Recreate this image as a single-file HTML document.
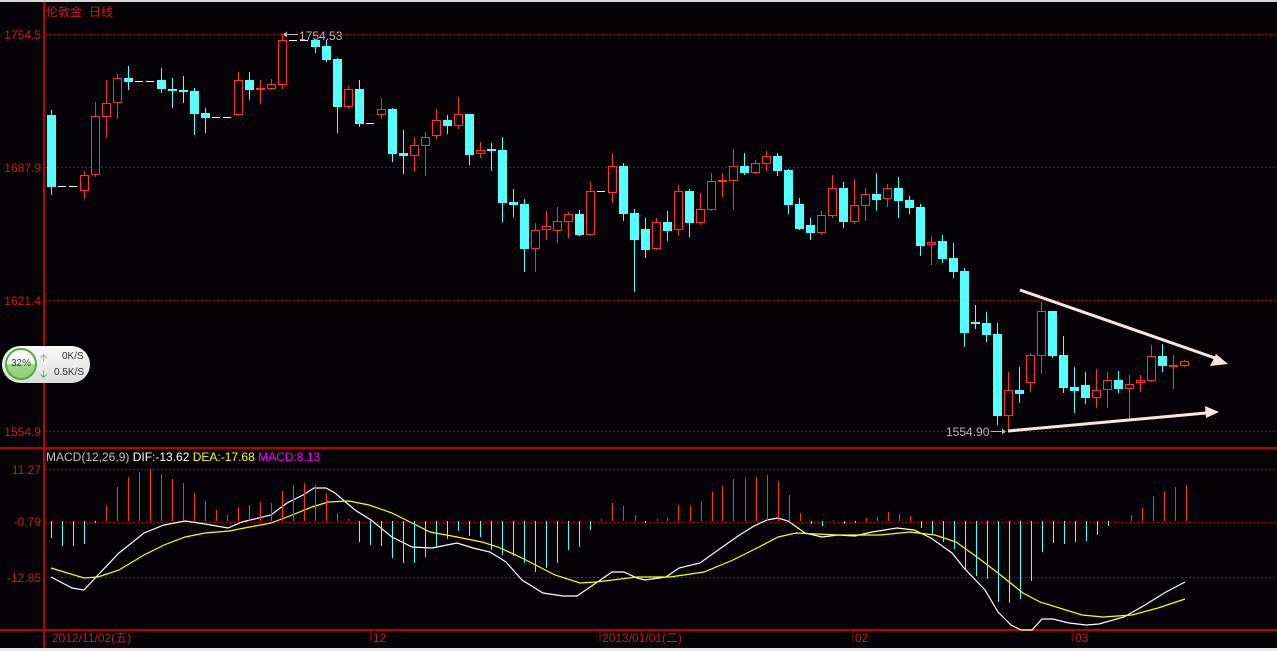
<!DOCTYPE html>
<html><head><meta charset="utf-8"><style>
html,body{margin:0;padding:0;background:#050308;}
body{width:1277px;height:651px;overflow:hidden;position:relative;font-family:"Liberation Sans","Noto Sans CJK SC",sans-serif;}
svg{position:absolute;left:0;top:0}
.pill{position:absolute;left:2px;top:346px;width:88px;height:37px;border-radius:19px;background:linear-gradient(#fafafa,#dcdcdc);}
.circ{position:absolute;left:3px;top:2px;width:28px;height:28px;border-radius:50%;border:2px solid #4caf3a;background:linear-gradient(#fff 0,#fff 50%,#9fd88a 50%,#8fd070 100%);font-size:10px;color:#333;text-align:center;line-height:28px}
.sp{position:absolute;font-size:10px;color:#333;}
</style></head><body>
<svg width="1277" height="651" xmlns="http://www.w3.org/2000/svg" shape-rendering="crispEdges">
<rect x="0" y="0" width="1277" height="2" fill="#d8d8d8"/>
<rect x="0" y="648" width="1277" height="3" fill="#e8e8e8"/>
<g stroke="#b00000" stroke-dasharray="2,2" stroke-width="1">
<line x1="45" y1="34.5" x2="1277" y2="34.5"/><line x1="45" y1="167.5" x2="1277" y2="167.5"/>
<line x1="45" y1="300.5" x2="1277" y2="300.5"/><line x1="45" y1="431.5" x2="1277" y2="431.5"/>
<line x1="45" y1="469.5" x2="1277" y2="469.5"/><line x1="45" y1="522.5" x2="1277" y2="522.5"/>
<line x1="45" y1="577.5" x2="1277" y2="577.5"/>
</g>
<g stroke="#c00000" stroke-width="2">
<line x1="44" y1="2" x2="44" y2="648"/><line x1="0" y1="448" x2="1277" y2="448"/><line x1="0" y1="630" x2="1277" y2="630"/>
<line x1="371" y1="630" x2="371" y2="641" stroke-width="1"/><line x1="600" y1="630" x2="600" y2="641" stroke-width="1"/>
<line x1="853" y1="630" x2="853" y2="641" stroke-width="1"/><line x1="1073" y1="630" x2="1073" y2="641" stroke-width="1"/>
</g>
<g font-family="Liberation Sans,sans-serif" font-size="12" fill="#c81e1e" text-anchor="end">
<text x="41" y="39">1754.5</text><text x="41" y="172">1687.9</text><text x="41" y="305">1621.4</text><text x="41" y="436">1554.9</text>
<text x="41" y="474">11.27</text><text x="41" y="526">-0.79</text><text x="41" y="582">-12.85</text>
</g>
<g font-family="Liberation Sans,'Noto Sans CJK SC',sans-serif" font-size="12" fill="#c81e1e">
<text x="46" y="16">伦敦金</text><text x="89" y="16">日线</text>
<text x="52" y="642">2012/11/02(五)</text><text x="373" y="642">12</text><text x="602" y="642">2013/01/01(二)</text>
<text x="855" y="642">02</text><text x="1075" y="642">03</text>
</g>
<g font-family="Liberation Sans,sans-serif" font-size="12">
<text x="46" y="461" fill="#c0c0c0">MACD(12,26,9) <tspan fill="#fff">DIF:-13.62</tspan> <tspan fill="#ffff00">DEA:-17.68</tspan> <tspan fill="#ff00ff">MACD:8.13</tspan></text>
<text x="299" y="40" fill="#b8b8b8">1754.53</text><text x="946" y="436" fill="#b8b8b8">1554.90</text>
</g>
<line x1="285" y1="34.5" x2="298" y2="34.5" stroke="#b8b8b8"/><path d="M283 34.5l4-3v6z" fill="#b8b8b8"/>
<line x1="991" y1="431.5" x2="1004" y2="431.5" stroke="#b8b8b8"/><path d="M1006 431.5l-4-3v6z" fill="#b8b8b8"/>
<g id="c"></g>
<g shape-rendering="auto">
<line x1="1020" y1="290" x2="1215" y2="358" stroke="#ffe4dc" stroke-width="3"/>
<path d="M1228 364l-18 2 6-12z" fill="#ffe4dc"/>
<line x1="1008" y1="431" x2="1206" y2="413" stroke="#ffe4dc" stroke-width="3"/>
<path d="M1219 412l-14-6 1 12z" fill="#ffe4dc"/>
<polyline fill="none" stroke="#fff" stroke-width="1.2" points="51,577 72,588 84,590 98,575 119,553 144,533 164,525 185,521 205,524 228,528 242,522 271,515 287,503 303,495 314,488 326,488 335,493 355,510 371,520 392,537 412,547 432,548 457,543 473,548 490,552 506,562 522,580 543,593 563,596 577,596 596,583 612,572 624,572 637,578 645,580 666,577 679,568 700,563 721,548 738,536 754,526 767,520 778,518 788,521 805,533 822,537 838,535 855,536 872,532 897,528 914,530 931,538 952,553 964,568 985,590 998,612 1011,625 1021,630 1032,630 1042,619 1053,619 1069,623 1086,625 1099,624 1124,617 1145,605 1166,592 1185,582"/>
<polyline fill="none" stroke="#ffff00" stroke-width="1.2" points="51,568 84,578 98,577 119,570 144,555 164,545 185,537 205,533 229,531 271,523 287,517 312,507 328,502 349,501 369,505 392,513 410,522 430,532 457,537 482,542 498,547 522,558 555,575 580,583 596,582 637,577 670,577 704,572 733,560 759,547 778,537 796,533 838,535 880,535 910,532 935,535 956,542 977,557 998,573 1023,593 1040,602 1082,615 1103,617 1132,615 1158,608 1185,599"/>
</g>
<g id="h"></g>
</svg>
<div class="pill"><div class="circ">32%</div>
<span class="sp" style="left:38px;top:5px;color:#f06010">&#129121;</span><span class="sp" style="left:60px;top:5px">0K/S</span>
<span class="sp" style="left:38px;top:21px;color:#2a8a2a">&#129123;</span><span class="sp" style="left:52px;top:21px">0.5K/S</span></div>
<script>
var D=[["C",115,187,110,194],["D",186],["D",186],["R",175,191,171,198],["R",116,175,102,176],["R",103,117,80,137],["R",78,103,74,118],["C",78,82,66,89],["D",81],["D",81],["C",80,89,68,92],["C",89,91,78,107],["C",90,92,76,102],["C",91,114,88,134],["C",113,118,108,132],["D",117],["D",117],["R",80,115,72,115],["C",80,90,72,99],["R",88,90,80,103],["R",84,89,79,89],["R",40,85,34,88],["D",40],["D",40],["C",40,47,40,52],["C",46,60,40,61],["C",59,107,58,132],["R",89,107,86,108],["C",89,124,80,126],["D",123],["R",109,115,98,118],["C",109,154,108,161],["C",153,156,130,173],["R",145,156,137,171],["R",137,146,132,175],["R",120,136,109,138],["C",120,126,115,133],["R",114,126,97,128],["C",114,155,114,164],["R",150,154,142,157],["C",149,151,143,170],["C",150,203,137,221],["C",202,205,189,216],["C",204,249,199,271],["R",230,249,223,271],["R",226,230,211,239],["R",221,231,207,242],["R",214,222,212,237],["C",214,235,210,235],["R",191,235,182,235],["D",191],["R",166,193,153,202],["C",166,214,163,220],["C",213,240,209,291],["C",229,250,218,257],["R",222,249,218,249],["C",222,231,211,240],["R",191,230,185,235],["C",191,223,189,236],["R",209,223,193,224],["R",181,210,173,210],["R",180,181,173,196],["R",166,181,149,209],["C",166,173,153,174],["R",163,173,160,173],["R",156,164,151,170],["C",156,171,153,175],["C",170,205,169,213],["C",204,229,198,229],["C",225,233,218,239],["R",215,233,211,234],["R",188,216,175,217],["C",188,222,182,227],["R",205,222,179,223],["R",194,206,188,220],["C",194,200,173,210],["R",188,199,184,206],["C",188,201,177,217],["C",200,208,196,213],["C",207,246,204,255],["R",242,245,236,264],["C",241,259,235,262],["C",258,272,243,277],["C",271,333,268,346],["C",322,324,305,328],["C",323,335,312,341],["C",334,416,323,424],["R",390,416,372,431],["C",390,394,367,402],["R",355,383,353,391],["R",311,356,302,373],["C",311,356,311,357],["C",355,388,336,392],["C",387,391,367,412],["C",385,398,372,403],["R",390,398,369,407],["R",380,390,372,407],["C",380,389,371,392],["R",384,389,375,419],["R",380,383,375,391],["R",356,381,345,381],["C",356,366,344,371],["R",365,366,355,388],["R",361,366,360,366]];
var s="",R="#ff3232",C="#54ffff";
D.forEach(function(d,i){var x=47+11*i,c=x+4.5;
if(d[0]=="D"){s+='<line x1="'+x+'" x2="'+(x+8)+'" y1="'+(d[1]+.5)+'" y2="'+(d[1]+.5)+'" stroke="#fff"/>';return;}
var col=d[0]=="R"?R:C;
s+='<line x1="'+c+'" x2="'+c+'" y1="'+d[3]+'" y2="'+(d[4]+1)+'" stroke="'+col+'"/>';
var h=d[2]-d[1];
if(d[0]=="C"||h<=2)s+='<rect x="'+x+'" y="'+d[1]+'" width="9" height="'+Math.max(h,2)+'" fill="'+col+'"/>';
else s+='<rect x="'+(x+.5)+'" y="'+(d[1]+.5)+'" width="8" height="'+(h-1)+'" fill="#050308" stroke="'+col+'"/>';});
document.getElementById("c").innerHTML=s;
var H=[538,546,546,544,523,506,487,477,472,469,474,479,483,493,501,510,515,507,505,502,503,491,485,483,485,493,513,519,542,545,546,558,563,563,557,548,539,531,536,537,550,555,556,563,572,568,563,550,547,530,519,503,506,515];
var H2=[[623,506],[635,515],[645,523],[657,519],[667,518],[678,505],[690,506],[701,502],[712,492],[722,486],[733,479],[745,478],[756,477],[767,475],[778,481],[789,495],[800,513],[811,524],[822,526],[833,520],[844,524],[855,523],[866,518],[877,517],[888,512],[899,514],[910,516],[921,528],[932,534],[943,542],[954,549],[965,569],[976,576],[987,579],[998,602],[1009,603],[1020,599],[1031,581],[1042,552],[1053,543],[1064,544],[1075,542],[1086,541],[1097,535],[1108,526],[1131,515],[1142,508],[1153,496],[1164,491],[1175,487],[1186,485]];
var t="";
function bar(x,y){var col=y<521?R:C;var a=Math.min(y,521),b=Math.max(y,521);if(b-a<1)b=a+1;t+='<line x1="'+(x+.5)+'" x2="'+(x+.5)+'" y1="'+a+'" y2="'+b+'" stroke="'+col+'"/>';}
H.forEach(function(y,i){var x=51+11*i;if(x<618)bar(x,y);});
H2.forEach(function(p){bar(p[0],p[1]);});
document.getElementById("h").innerHTML=t;
</script>
</body></html>
